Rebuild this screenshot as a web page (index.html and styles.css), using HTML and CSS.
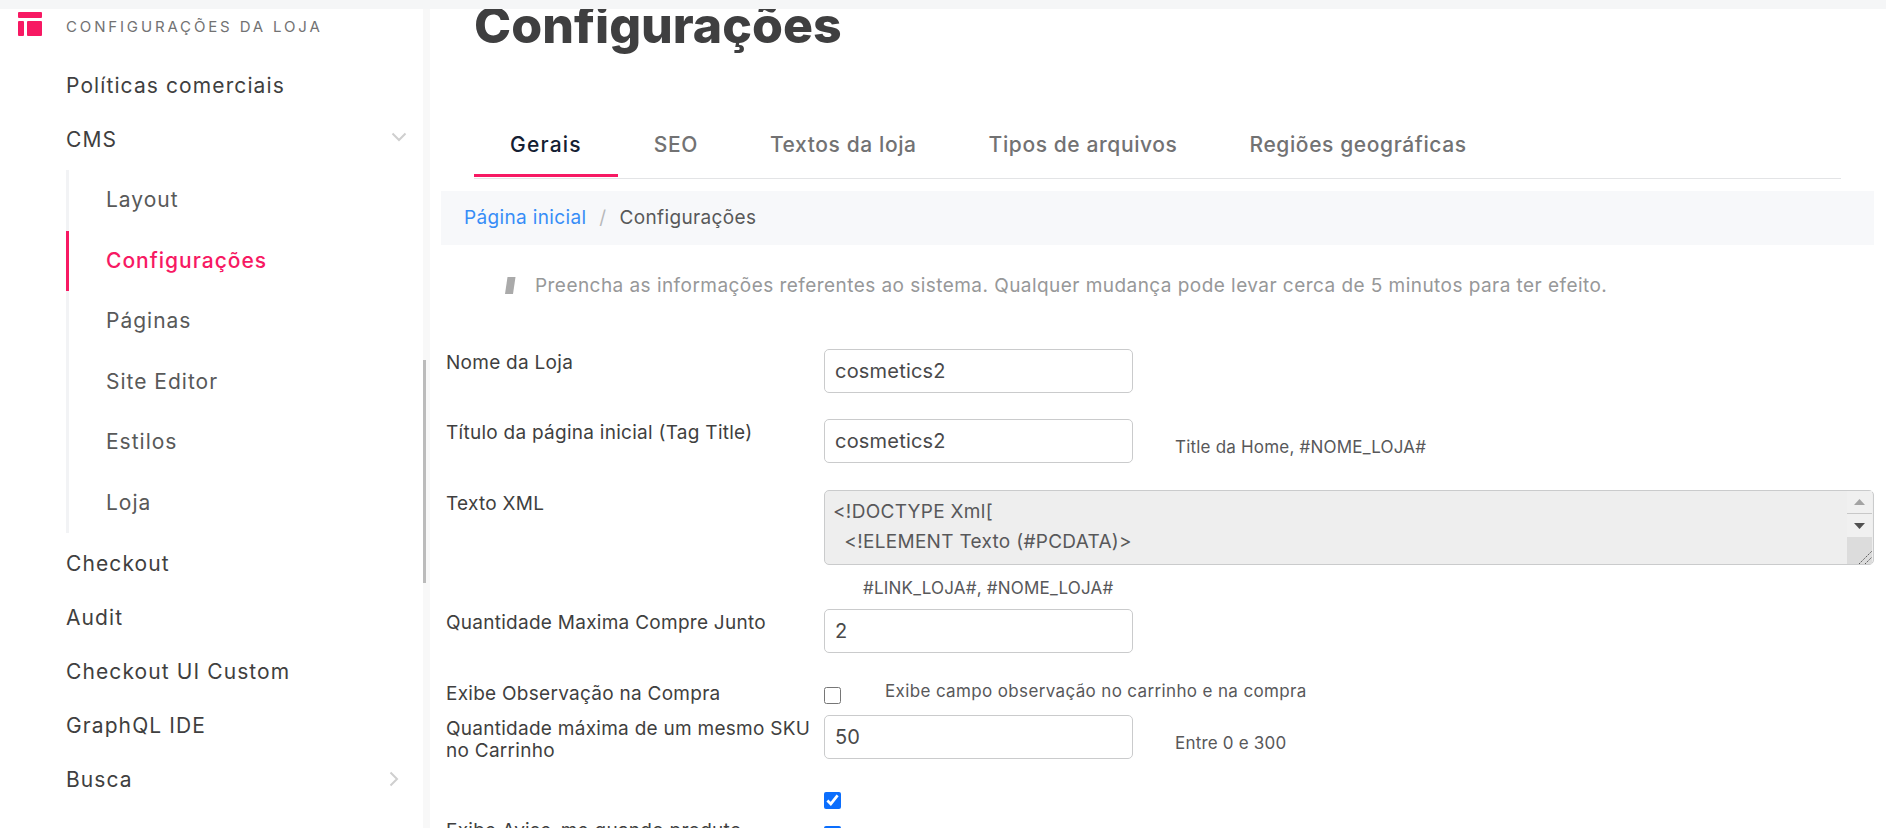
FILE: index.html
```html
<!DOCTYPE html>
<html lang="pt-BR">
<head>
    <meta charset="UTF-8">
    <meta name="viewport" content="width=device-width, initial-scale=1.0">
    <title>Configurações</title>
    <link rel="stylesheet" href="styles.css">
</head>
<body>
    <div class="top-strip"></div>
    <div class="layout">
        <aside class="sidebar">
            <div class="sidebar-header">
                <svg class="sidebar-icon" width="24" height="24" viewBox="0 0 24 24">
                    <rect x="0" y="0" width="24" height="6" rx="1"/>
                    <rect x="0" y="9" width="6" height="15" rx="1"/>
                    <rect x="9" y="9" width="15" height="15" rx="1"/>
                </svg>
                <span class="sidebar-title">CONFIGURAÇÕES DA LOJA</span>
            </div>
            <nav class="menu">
                <a class="menu-item">Políticas comerciais</a>
                <a class="menu-item">CMS
                    <svg class="chevron chevron-down" width="16" height="10" viewBox="0 0 16 10"><path d="M1.5 1.5 8 8l6.500-6.500"/></svg>
                </a>
                <div class="submenu">
                    <a class="submenu-item">Layout</a>
                    <a class="submenu-item active">Configurações</a>
                    <a class="submenu-item">Páginas</a>
                    <a class="submenu-item">Site Editor</a>
                    <a class="submenu-item">Estilos</a>
                    <a class="submenu-item">Loja</a>
                </div>
                <a class="menu-item">Checkout</a>
                <a class="menu-item">Audit</a>
                <a class="menu-item">Checkout UI Custom</a>
                <a class="menu-item">GraphQL IDE</a>
                <a class="menu-item">Busca
                    <svg class="chevron chevron-right" width="10" height="16" viewBox="0 0 10 16"><path d="M1.500 1.500 8 8l-6.500 6.500"/></svg>
                </a>
            </nav>
        </aside>
        <div class="side-scroll"><div class="side-thumb"></div></div>

        <main class="content">
            <h1 class="page-title">Configurações</h1>

            <ul class="tabs">
                <li class="tab active">Gerais</li>
                <li class="tab">SEO</li>
                <li class="tab">Textos da loja</li>
                <li class="tab">Tipos de arquivos</li>
                <li class="tab">Regiões geográficas</li>
            </ul>

            <div class="breadcrumb">
                <a class="crumb-link">Página inicial</a>
                <span class="crumb-sep">/</span>
                <span>Configurações</span>
            </div>

            <p class="info">
                <svg class="info-icon" width="11" height="17" viewBox="0 0 11 17"><polygon points="2.500,0 10.500,0 8,17 0,17"/></svg>
                Preencha as informações referentes ao sistema. Qualquer mudança pode levar cerca de 5 minutos para ter efeito.
            </p>

            <form class="form">
                <div class="form-row">
                    <label class="form-label">Nome da Loja</label>
                    <div class="form-field">
                        <input class="text-input" type="text" value="cosmetics2">
                    </div>
                </div>
                <div class="form-row row-title">
                    <label class="form-label">Título da página inicial (Tag Title)</label>
                    <div class="form-field">
                        <input class="text-input" type="text" value="cosmetics2">
                        <small class="hint">Title da Home, #NOME_LOJA#</small>
                    </div>
                </div>
                <div class="form-row row-xml">
                    <label class="form-label">Texto XML</label>
                    <div>
                        <div class="xml-wrap">
                            <textarea class="xml-input" disabled>&lt;!DOCTYPE Xml[
  &lt;!ELEMENT Texto (#PCDATA)&gt;</textarea>
                            <!-- native scrollbar is overlay in headless, so draw it -->
                            <div class="xml-scroll">
                                <div class="scroll-btn scroll-up">
                                    <svg width="11" height="6" viewBox="0 0 11 6"><polygon points="5.500,0 11,6 0,6"/></svg>
                                </div>
                                <div class="scroll-btn scroll-down">
                                    <svg width="11" height="6" viewBox="0 0 11 6"><polygon points="0,0 11,0 5.500,6"/></svg>
                                </div>
                                <div class="scroll-grip">
                                    <svg width="13" height="13" viewBox="0 0 13 13"><path d="M0 13 13 0M6 13l7-7"/></svg>
                                </div>
                            </div>
                        </div>
                        <small class="hint-below">#LINK_LOJA#, #NOME_LOJA#</small>
                    </div>
                </div>
                <div class="form-row row-compre">
                    <label class="form-label">Quantidade Maxima Compre Junto</label>
                    <div class="form-field">
                        <input class="text-input" type="text" value="2">
                    </div>
                </div>
                <div class="form-row row-obs">
                    <label class="form-label">Exibe Observação na Compra</label>
                    <div class="form-field">
                        <input class="check" type="checkbox">
                        <small class="hint-check">Exibe campo observação no carrinho e na compra</small>
                    </div>
                </div>
                <div class="form-row row-sku">
                    <label class="form-label">Quantidade máxima de um mesmo SKU no Carrinho</label>
                    <div class="form-field">
                        <input class="text-input" type="text" value="50">
                        <small class="hint">Entre 0 e 300</small>
                    </div>
                </div>
                <div class="form-row row-lone">
                    <span></span>
                    <div class="form-field">
                        <input class="check" type="checkbox" checked>
                    </div>
                </div>
                <div class="form-row row-avise">
                    <label class="form-label">Exibe Avise-me quando produto</label>
                    <div class="form-field">
                        <input class="check" type="checkbox" checked>
                    </div>
                </div>
            </form>
        </main>
    </div>
</body>
</html>
```

FILE: styles.css
```css
* {
    box-sizing: border-box;
    margin: 0;
    padding: 0;
}

html, body {
    height: 828px;
    overflow: hidden;
}

body {
    font-family: Inter, "Noto Sans", sans-serif;
    background-color: white;
    color: #3f3f40;
}

.top-strip {
    height: 9px;
    background-color: #f5f6f7;
}

.layout {
    display: flex;
    height: 819px;
    overflow: hidden;
}

/* sidebar */
.sidebar {
    width: 423px;
    flex-shrink: 0;
    padding-top: 3px;
}

.sidebar-header {
    display: flex;
    align-items: flex-start;
    height: 24px;
    padding-left: 18px;
    font-size: 15px;
    letter-spacing: 2.85px;
    color: #727273;
}

.sidebar-icon {
    fill: #f71963;
    margin-right: 24px;
}

.sidebar-title {
    line-height: 30px;
}

.menu {
    margin-top: 22px;
}

.menu-item {
    display: flex;
    align-items: center;
    justify-content: space-between;
    height: 54px;
    padding-left: 66px;
    font-size: 21px;
    letter-spacing: 1.1px;
    color: #3f3f40;
}

.chevron {
    fill: none;
    stroke: #cfcfcf;
    stroke-width: 2;
}

.chevron-down {
    margin-right: 16px;
    margin-bottom: 4px;
}

.chevron-right {
    margin-right: 24px;
}

.submenu {
    margin-left: 66px;
    margin-top: 4px;
    margin-bottom: 3px;
    border-left: 3px solid #f2f3f5;
}

.submenu-item {
    display: block;
    height: 60.500px;
    line-height: 60px;
    margin-left: -3px;
    padding-left: 37px;
    border-left: 3px solid transparent;
    font-size: 21px;
    letter-spacing: 1px;
    color: #585959;
}

.submenu-item.active {
    border-left-color: #f71963;
    color: #f71963;
    font-weight: 500;
}

.side-scroll {
    width: 7px;
    flex-shrink: 0;
    background-color: #f8f8f8;
}

.side-thumb {
    width: 3px;
    height: 223px;
    margin-top: 351px;
    background-color: #bbb;
}

/* main */
.content {
    flex: 1;
    padding: 0 12px 0 11px;
    min-width: 0;
}

.page-title {
    height: 38px;
    margin-left: 33px;
    font-size: 50px;
    line-height: 33px;
    font-weight: 800;
    color: #3f3f40;
}

.tabs {
    display: flex;
    margin: 72px 33px 0;
    padding-bottom: 1px;
    list-style: none;
    border-bottom: 1px solid #e3e4e6;
}

.tab {
    height: 58px;
    padding: 0 36px;
    line-height: 52px;
    font-size: 21px;
    letter-spacing: 0.6px;
    font-weight: 500;
    color: #727273;
    border-bottom: 3px solid transparent;
}

.tab.active {
    color: #142032;
    letter-spacing: 1.2px;
    border-bottom-color: #f71963;
}

.breadcrumb {
    display: flex;
    align-items: center;
    height: 54px;
    margin-top: 12px;
    padding-left: 23px;
    padding-bottom: 2px;
    background-color: #f7f8fa;
    font-size: 19px;
    letter-spacing: 0.35px;
    color: #585959;
}

.crumb-link {
    color: #368df7;
}

.crumb-sep {
    margin: 0 13px;
    color: #b8b9ba;
}

.info {
    display: flex;
    align-items: center;
    gap: 19px;
    margin-top: 29px;
    margin-left: 64px;
    font-size: 19px;
    letter-spacing: 0.45px;
    color: #979899;
}

.info-icon {
    fill: #aaa;
}

/* form */
.form {
    margin-top: 52px;
}

.form-row {
    display: grid;
    grid-template-columns: 378px 1fr;
    margin-left: 5px;
    margin-bottom: 26px;
}

.form-label {
    padding-top: 3px;
    padding-right: 4px;
    font-size: 19px;
    letter-spacing: 0.27px;
    line-height: 22px;
    color: #3f3f40;
}

.form-field {
    display: flex;
    align-items: flex-start;
}

.text-input {
    width: 309px;
    height: 44px;
    padding: 0 10px;
    border: 1px solid #cacbcc;
    border-radius: 5px;
    font-family: inherit;
    font-size: 20px;
    letter-spacing: 0.2px;
    color: #49494a;
    background-color: white;
}

.xml-wrap {
    position: relative;
    height: 75px;
}

.xml-input {
    display: block;
    width: 100%;
    height: 75px;
    padding: 6px 8px;
    border: 1px solid #cacbcc;
    border-radius: 5px;
    font-family: inherit;
    font-size: 19px;
    letter-spacing: 0.3px;
    line-height: 30px;
    color: #58585a;
    background-color: #eee;
    overflow: hidden;
    resize: none;
}

.xml-scroll {
    position: absolute;
    top: 1px;
    right: 2px;
    bottom: 1px;
    display: flex;
    flex-direction: column;
    width: 25px;
    background-color: #f0f0f0;
}

.scroll-btn {
    display: flex;
    align-items: center;
    justify-content: center;
    height: 23px;
}

.scroll-up {
    fill: #a3a3a3;
    border-bottom: 1px solid #c8c8c8;
}

.scroll-down {
    fill: #505050;
}

.scroll-grip {
    display: flex;
    align-items: flex-end;
    justify-content: flex-end;
    flex: 1;
    background-color: #dcdcdc;
}

.scroll-grip svg {
    fill: none;
    stroke: #555;
    stroke-width: 1;
    stroke-dasharray: 1.500 1;
}

.hint {
    margin-left: 42px;
    margin-top: 18px;
    font-size: 17px;
    letter-spacing: 0.2px;
    line-height: 20px;
    color: #58585a;
}

.hint-below {
    display: block;
    margin-top: 12px;
    margin-left: 39px;
    font-size: 17px;
    letter-spacing: 0.2px;
    line-height: 22px;
    color: #58585a;
}

.hint-check {
    margin-left: 44px;
    margin-top: -2px;
    font-size: 17px;
    letter-spacing: 0.36px;
    line-height: 20px;
    color: #58585a;
}

.check {
    width: 17px;
    height: 17px;
    margin-top: 4px;
    accent-color: #0b6efd;
}

.row-title {
    margin-bottom: 27px;
}

.row-xml {
    margin-bottom: 10px;
}

.row-compre {
    margin-bottom: 30px;
}

.row-obs {
    margin-bottom: 10px;
}

.row-obs .form-label {
    padding-top: 0;
}

.row-sku {
    margin-bottom: 26px;
}

.row-lone {
    margin-bottom: 11px;
}

.row-avise .form-label {
    padding-top: 0;
}

.row-avise .check {
    margin-top: 6px;
}
```
